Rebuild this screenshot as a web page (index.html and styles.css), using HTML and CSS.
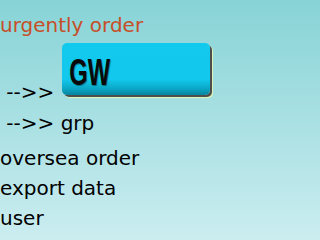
FILE: index.html
```html
<!DOCTYPE html>
<html>
<head>
<meta charset="utf-8">
<link rel="stylesheet" href="styles.css">
</head>
<body>
<div class="menu">
  <div class="row urgent">urgently order</div>
  <div class="row btn-row">&nbsp;--&gt;&gt; <span class="gw-btn"><span class="gw-face"><span class="gw-label">GW</span></span></span></div>
  <div class="row grp">&nbsp;--&gt;&gt; grp</div>
  <div class="row oversea">oversea order</div>
  <div class="row">export data</div>
  <div class="row">user</div>
</div>
</body>
</html>
```

FILE: styles.css
```css
html {
  height: 100%;
}
body {
  margin: 0;
  min-height: 100%;
  background: linear-gradient(to bottom, #87d3d6 0%, #cbedf0 100%);
  font-family: "DejaVu Sans", Verdana, sans-serif;
  font-size: 20px;
  color: #000;
}
.menu {
  padding-top: 10px;
}
.row {
  line-height: 30px;
  white-space: nowrap;
}
.urgent {
  color: #c64f28;
}
.btn-row {
  margin-top: 3px;
}
.grp {
  margin-top: 1px;
}
.oversea {
  margin-top: 5px;
}
.gw-btn {
  display: inline-block;
  overflow: hidden;
  width: 152px;
  height: 56px;
  vertical-align: baseline;
}
.gw-face {
  display: block;
  margin-left: 1px;
  width: 148px;
  height: 52px;
  border-radius: 5px;
  background: linear-gradient(to bottom, #12caee 0%, #12c8ec 70%, #0aa6c6 88%, #07849e 100%);
  box-shadow: 2px 2px 0 #4e4e4e, 3px 3px 1px #e2f7b4;
}
.gw-label {
  display: block;
  padding: 12px 0 0 11px;
  font-family: "Liberation Sans", Arial, sans-serif;
  font-weight: bold;
  font-size: 36px;
  line-height: 36px;
  color: #0a0a0a;
  transform: scaleX(0.66);
  transform-origin: left top;
  text-shadow: 1px 1px 1px rgba(0, 0, 0, 0.4);
}
```
